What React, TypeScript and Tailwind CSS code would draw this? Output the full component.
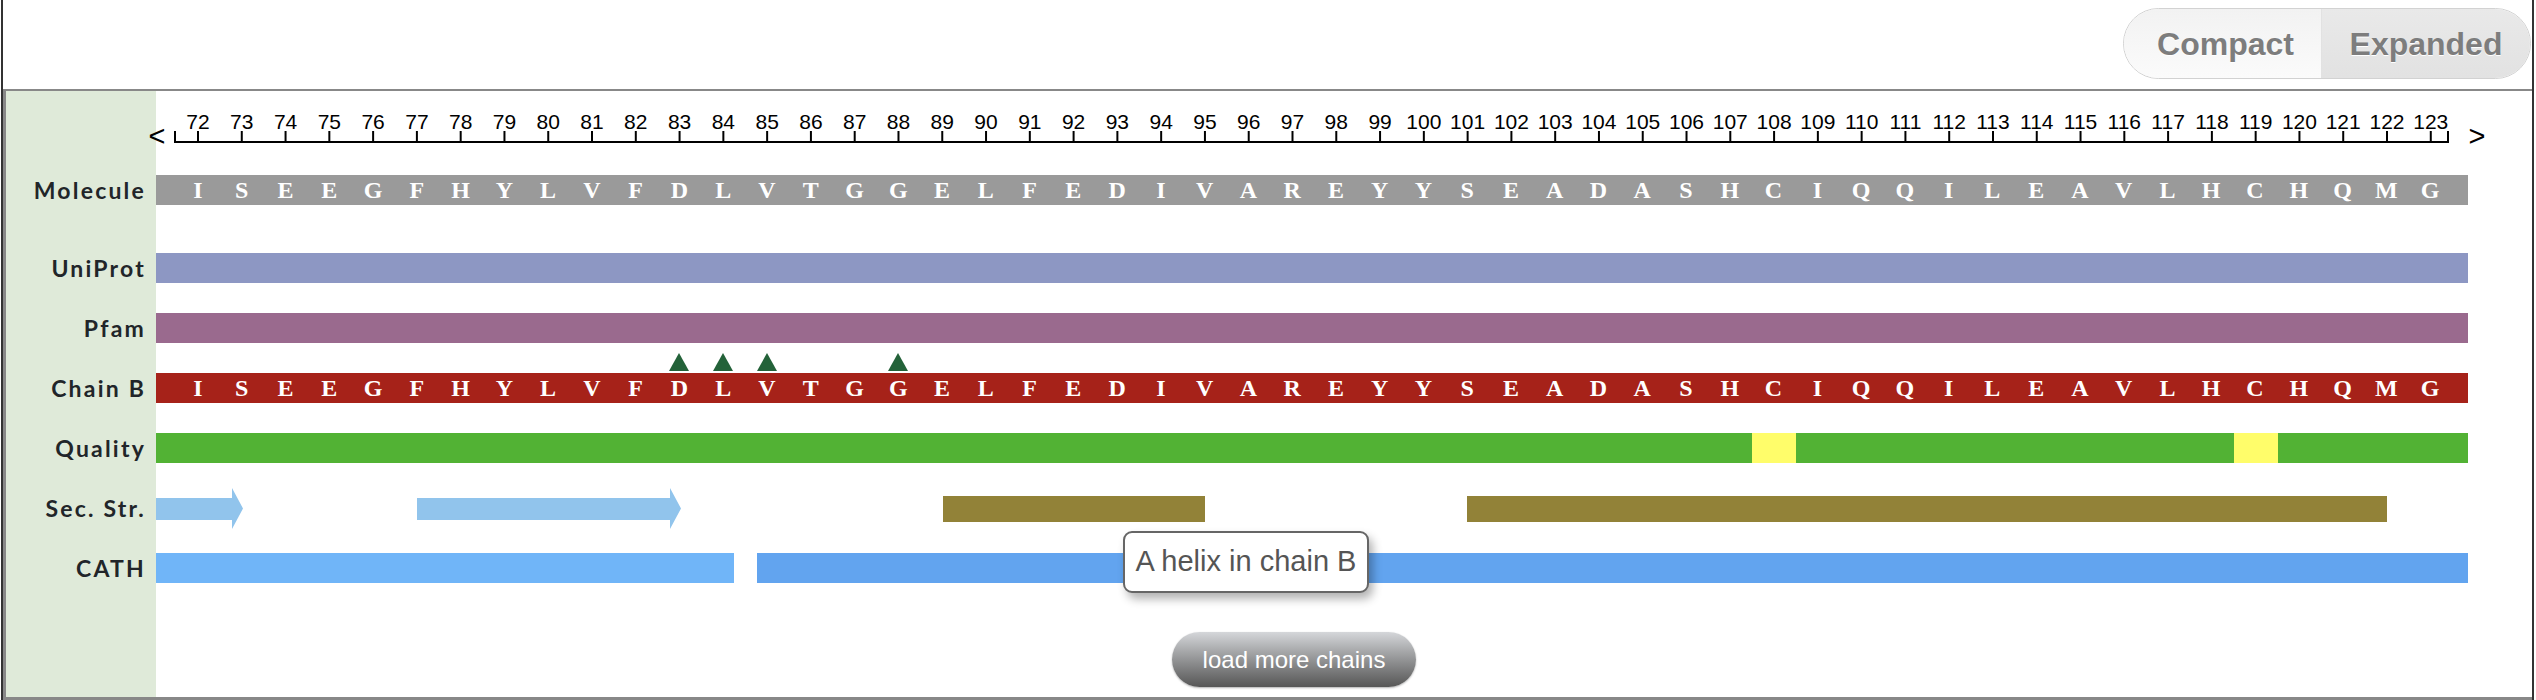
import React from 'react'

const SEQ = 'ISEEGFHYLVFDLVTGGELFEDIVAREYYSEADASHCIQQILEAVLHCHQMG'.split('')
const START = 72
const STEP = 43.78
// x of residue i, measured from the left edge of the track cell
const cx = (i: number) => 42 + i * STEP

function Label({ text }: { text?: string }) {
  return (
    <div className="w-[150px] shrink-0 self-stretch bg-[#dfead9] flex items-center justify-end pr-[10px] font-['Lato',sans-serif] font-bold text-[23px] tracking-[2.2px] text-[#212529]">
      {text}
    </div>
  )
}

function Triangle() {
  return (
    <svg width="20" height="18" viewBox="0 0 20 18" className="absolute left-1/2 -translate-x-1/2 bottom-[32px]">
      <polygon points="10,0 20,18 0,18" fill="#236239" />
    </svg>
  )
}

function SeqBar({ bg, marks = [] }: { bg: string; marks?: number[] }) {
  return (
    <div className={`w-[2312px] h-[30px] flex pl-[20.1px] ${bg}`}>
      {SEQ.map((aa, i) => (
        <div
          key={i}
          className="relative w-[43.78px] shrink-0 h-full flex items-center justify-center font-['Liberation_Serif',serif] font-bold text-[24px] text-white"
        >
          {marks.includes(START + i) && <Triangle />}
          {aa}
        </div>
      ))}
    </div>
  )
}

function Ruler() {
  const font = "'Liberation Sans', Arial, sans-serif"
  return (
    <svg width="2376" height="69" className="overflow-visible">
      <text x="1" y="55" fontSize="29" fontFamily={font} textAnchor="middle" fill="#000">&lt;</text>
      <text x="2321" y="55" fontSize="29" fontFamily={font} textAnchor="middle" fill="#000">&gt;</text>
      <line x1="19" y1="51" x2="2292" y2="51" stroke="#000" strokeWidth="2" />
      <line x1="19" y1="40" x2="19" y2="52" stroke="#000" strokeWidth="2" />
      <line x1="2292" y1="40" x2="2292" y2="52" stroke="#000" strokeWidth="2" />
      {SEQ.map((_, i) => (
        <g key={i}>
          <line x1={cx(i)} y1="40" x2={cx(i)} y2="52" stroke="#000" strokeWidth="2" />
          <text x={cx(i)} y="38" fontSize="21" fontFamily={font} textAnchor="middle" fill="#000">
            {START + i}
          </text>
        </g>
      ))}
    </svg>
  )
}

function SecStr() {
  return (
    <svg width="2312" height="41">
      <polygon points="0,10 76,10 76,0 87,20.5 76,41 76,32 0,32" fill="#91c4ec" />
      <polygon points="261,10 514,10 514,0 525,20.5 514,41 514,32 261,32" fill="#91c4ec" />
      <rect x="787" y="8" width="262" height="26" fill="#928238" />
      <rect x="1311" y="8" width="920" height="26" fill="#928238" />
    </svg>
  )
}

export default function App() {
  return (
    <div className="w-[2536px] h-[700px] bg-white pl-[1px] overflow-hidden">
      <div className="w-[2533px] h-full flex flex-col border-x-2 border-[#333]">
        {/* header with view toggle */}
        <div className="h-[89px] shrink-0 flex justify-end items-start pt-[8px] pr-[1px]">
          <div className="h-[71px] flex rounded-full border border-[#d2d2d2] overflow-hidden font-['Liberation_Sans',Arial,sans-serif] font-bold text-[32px] text-[#7d7d7d] [text-shadow:0_1px_0_#fff]">
            <div className="w-[198px] flex items-center justify-center pl-[6px] bg-linear-to-b from-[#f2f2f2] to-[#fbfbfb] border-r border-[#e2e2e2]">
              Compact
            </div>
            <div className="w-[208px] flex items-center justify-center bg-linear-to-b from-[#e9e9e9] to-[#e2e2e2]">
              Expanded
            </div>
          </div>
        </div>

        {/* track panel */}
        <div className="relative flex-1 flex flex-col border-t-2 border-l-[3px] border-b-[3px] border-[#888]">
          <div className="h-[69px] flex">
            <Label />
            <div className="flex-1">
              <Ruler />
            </div>
          </div>

          <div className="h-[60px] flex items-center">
            <Label text="Molecule" />
            <SeqBar bg="bg-[#9a9a9a]" />
          </div>
          <div className="h-[18px] flex">
            <Label />
          </div>

          <div className="h-[60px] flex items-center">
            <Label text="UniProt" />
            <div className="w-[2312px] h-[30px] bg-[#8d97c3]" />
          </div>

          <div className="h-[60px] flex items-center">
            <Label text="Pfam" />
            <div className="w-[2312px] h-[30px] bg-[#9a6a8e]" />
          </div>

          <div className="h-[60px] flex items-center">
            <Label text="Chain B" />
            <SeqBar bg="bg-[#a62219]" marks={[83, 84, 85, 88]} />
          </div>

          <div className="h-[60px] flex items-center">
            <Label text="Quality" />
            <div className="w-[2312px] h-[30px] flex">
              <div className="w-[1596px] bg-[#52b234]" />
              <div className="w-[44px] bg-[#fffd6a]" />
              <div className="w-[438px] bg-[#52b234]" />
              <div className="w-[44px] bg-[#fffd6a]" />
              <div className="w-[190px] bg-[#52b234]" />
            </div>
          </div>

          <div className="h-[60px] flex items-center">
            <Label text="Sec. Str." />
            <SecStr />
          </div>

          <div className="h-[60px] flex items-center">
            <Label text="CATH" />
            <div className="w-[2312px] h-[30px] flex gap-[23px]">
              <div className="w-[578px] bg-[#70b5f8]" />
              <div className="flex-1 bg-[#62a4ef]" />
            </div>
          </div>

          <div className="flex-1 flex">
            <Label />
            <div className="pt-[34px] pl-[1016px]">
              <button className="w-[244px] h-[55px] rounded-full bg-linear-to-b from-[#d5d7da] to-[#575757] shadow-[0_1px_2px_rgba(0,0,0,0.3)] font-['Liberation_Sans',Arial,sans-serif] text-[24px] text-white">
                load more chains
              </button>
            </div>
          </div>

          {/* hover tooltip */}
          <div className="absolute left-[1117px] top-[440px] w-[246px] h-[62px] rounded-[9px] border-2 border-[#666] bg-white shadow-[4px_6px_10px_rgba(0,0,0,0.3)] flex items-center justify-center font-['Liberation_Sans',Arial,sans-serif] text-[29px] text-[#555]">
            A helix in chain B
          </div>
        </div>
      </div>
    </div>
  )
}
